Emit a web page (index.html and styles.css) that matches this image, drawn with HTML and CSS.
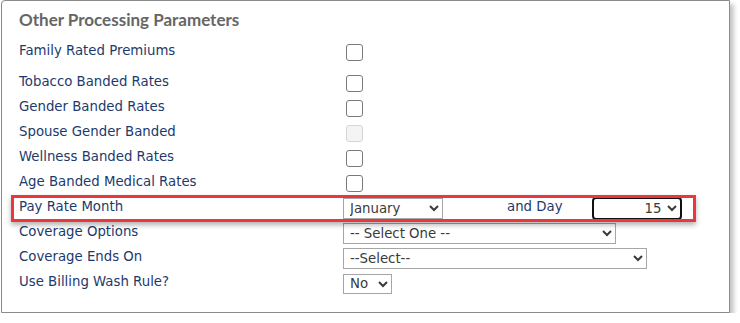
FILE: index.html
```html
<!DOCTYPE html>
<html lang="en">
<head>
    <meta charset="UTF-8">
    <meta name="viewport" content="width=device-width, initial-scale=1.0">
    <title>Other Processing Parameters</title>
    <link rel="stylesheet" href="styles.css">
</head>
<body>
    <div class="panel">
        <h2 class="panel-title">Other Processing Parameters</h2>

        <div class="row row-first">
            <label class="field-label" for="family-rated">Family Rated Premiums</label>
            <input type="checkbox" id="family-rated" class="check">
        </div>
        <div class="row">
            <label class="field-label" for="tobacco">Tobacco Banded Rates</label>
            <input type="checkbox" id="tobacco" class="check">
        </div>
        <div class="row">
            <label class="field-label" for="gender">Gender Banded Rates</label>
            <input type="checkbox" id="gender" class="check">
        </div>
        <div class="row">
            <label class="field-label" for="spouse">Spouse Gender Banded</label>
            <input type="checkbox" id="spouse" class="check" disabled>
        </div>
        <div class="row">
            <label class="field-label" for="wellness">Wellness Banded Rates</label>
            <input type="checkbox" id="wellness" class="check">
        </div>
        <div class="row">
            <label class="field-label" for="age-banded">Age Banded Medical Rates</label>
            <input type="checkbox" id="age-banded" class="check">
        </div>

        <div class="row">
            <label class="field-label" for="pay-month">Pay Rate Month</label>
            <div class="inline-fields">
                <select id="pay-month" class="select select-month">
                    <option>January</option>
                    <option>February</option>
                    <option>March</option>
                </select>
                <label class="field-label day-label" for="pay-day">and Day</label>
                <select id="pay-day" class="select select-day">
                    <option>15</option>
                    <option>1</option>
                </select>
            </div>
        </div>
        <div class="row">
            <label class="field-label" for="coverage-options">Coverage Options</label>
            <select id="coverage-options" class="select select-options">
                <option>-- Select One --</option>
            </select>
        </div>
        <div class="row">
            <label class="field-label" for="coverage-ends">Coverage Ends On</label>
            <select id="coverage-ends" class="select select-ends">
                <option>--Select--</option>
            </select>
        </div>
        <div class="row">
            <label class="field-label" for="wash-rule">Use Billing Wash Rule?</label>
            <select id="wash-rule" class="select select-yesno">
                <option>No</option>
                <option>Yes</option>
            </select>
        </div>

        <div class="highlight"></div>
    </div>
</body>
</html>
```

FILE: styles.css
```css
body {
    margin: 0;
    padding: 0;
    background-color: #ffffff;
    font-family: "DejaVu Sans", Verdana, sans-serif;
}
.panel {
    position: relative;
    box-sizing: border-box;
    width: 729px;
    height: 313px;
    margin-left: 1px;
    padding: 9px 0 0 17px;
    background: white;
    border: 1px solid #8a8a8a;
    border-top-left-radius: 4px;
    box-shadow: 4px 4px 4px rgba(0, 0, 0, 0.22);
}
.panel-title {
    margin: 0 0 10px 0;
    font-family: Lato, sans-serif;
    font-size: 17px;
    font-weight: 700;
    line-height: 20px;
    color: #666666;
}
.row {
    display: flex;
    align-items: center;
    height: 25px;
}
.row-first {
    margin-bottom: 6px;
}
.field-label {
    width: 324px;
    flex-shrink: 0;
    margin-bottom: 4px;
    font-size: 13.3px;
    color: #1d3a6c;
}
.check {
    appearance: none;
    box-sizing: border-box;
    width: 17px;
    height: 17px;
    margin: 0 0 0 3px;
    border: 1.5px solid #7a7a7a;
    border-radius: 3px;
    background: white;
}
.check:disabled {
    border-color: #d6d6d6;
    background: #f4f4f4;
}
.inline-fields {
    display: flex;
    align-items: center;
}
.select {
    box-sizing: border-box;
    height: 21px;
    padding: 0 2px;
    font-family: "DejaVu Sans", Verdana, sans-serif;
    font-size: 13.3px;
    color: #3a3a3a;
    background-color: white;
    border: 1px solid #a6a6a6;
    border-radius: 0;
}
.select-month {
    width: 100px;
}
.day-label {
    width: auto;
    margin-left: 64px;
    margin-right: 29px;
}
.select-day {
    width: 90px;
    height: 23px;
    border: 2px solid #111111;
    border-radius: 4px;
    text-align-last: right;
}
.select-options {
    width: 273px;
}
.select-ends {
    width: 304px;
}
.select-yesno {
    width: 49px;
    height: 20px;
}
.highlight {
    position: absolute;
    left: 9px;
    top: 194px;
    width: 679px;
    height: 21px;
    border: 3px solid #e8383e;
    box-shadow: 0 3px 5px rgba(0, 0, 0, 0.3);
    pointer-events: none;
}
```
